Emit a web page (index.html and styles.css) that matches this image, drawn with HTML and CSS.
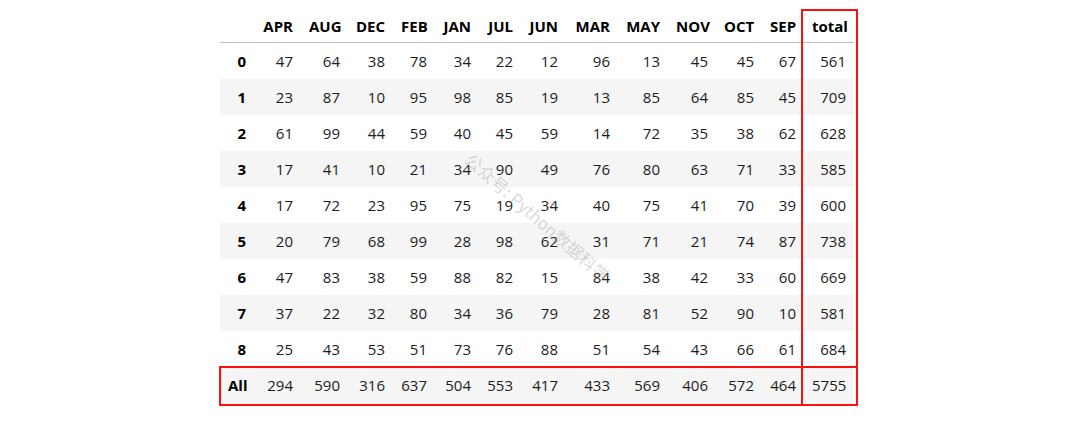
FILE: index.html
```html
<!DOCTYPE html>
<html>
<head>
<meta charset="utf-8">
<link rel="stylesheet" href="styles.css">
</head>
<body>
<div class="frame">
  <table class="df">
    <colgroup>
      <col class="w-idx"><col class="w-48"><col class="w-47"><col class="w-45"><col class="w-42"><col class="w-44"><col class="w-42"><col class="w-45"><col class="w-52"><col class="w-50"><col class="w-48b"><col class="w-46"><col class="w-42"><col class="w-50">
    </colgroup>
    <thead>
      <tr><th></th><th>APR</th><th>AUG</th><th>DEC</th><th>FEB</th><th>JAN</th><th>JUL</th><th>JUN</th><th>MAR</th><th>MAY</th><th>NOV</th><th>OCT</th><th>SEP</th><th>total</th></tr>
    </thead>
    <tbody>
      <tr><th>0</th><td>47</td><td>64</td><td>38</td><td>78</td><td>34</td><td>22</td><td>12</td><td>96</td><td>13</td><td>45</td><td>45</td><td>67</td><td>561</td></tr>
      <tr><th>1</th><td>23</td><td>87</td><td>10</td><td>95</td><td>98</td><td>85</td><td>19</td><td>13</td><td>85</td><td>64</td><td>85</td><td>45</td><td>709</td></tr>
      <tr><th>2</th><td>61</td><td>99</td><td>44</td><td>59</td><td>40</td><td>45</td><td>59</td><td>14</td><td>72</td><td>35</td><td>38</td><td>62</td><td>628</td></tr>
      <tr><th>3</th><td>17</td><td>41</td><td>10</td><td>21</td><td>34</td><td>90</td><td>49</td><td>76</td><td>80</td><td>63</td><td>71</td><td>33</td><td>585</td></tr>
      <tr><th>4</th><td>17</td><td>72</td><td>23</td><td>95</td><td>75</td><td>19</td><td>34</td><td>40</td><td>75</td><td>41</td><td>70</td><td>39</td><td>600</td></tr>
      <tr><th>5</th><td>20</td><td>79</td><td>68</td><td>99</td><td>28</td><td>98</td><td>62</td><td>31</td><td>71</td><td>21</td><td>74</td><td>87</td><td>738</td></tr>
      <tr><th>6</th><td>47</td><td>83</td><td>38</td><td>59</td><td>88</td><td>82</td><td>15</td><td>84</td><td>38</td><td>42</td><td>33</td><td>60</td><td>669</td></tr>
      <tr><th>7</th><td>37</td><td>22</td><td>32</td><td>80</td><td>34</td><td>36</td><td>79</td><td>28</td><td>81</td><td>52</td><td>90</td><td>10</td><td>581</td></tr>
      <tr><th>8</th><td>25</td><td>43</td><td>53</td><td>51</td><td>73</td><td>76</td><td>88</td><td>51</td><td>54</td><td>43</td><td>66</td><td>61</td><td>684</td></tr>
      <tr><th>All</th><td>294</td><td>590</td><td>316</td><td>637</td><td>504</td><td>553</td><td>417</td><td>433</td><td>569</td><td>406</td><td>572</td><td>464</td><td>5755</td></tr>
    </tbody>
  </table>
  <div class="mark mark-total"></div>
  <div class="mark mark-all"></div>
  <div class="watermark">公众号: Python数据科学</div>
</div>
</body>
</html>
```

FILE: styles.css
```css
html, body {
  margin: 0;
  padding: 0;
  background: #ffffff;
}

body {
  min-height: 427px;
}

.frame {
  position: relative;
  padding: 9px 0 24px 220px;
  font-family: "Open Sans", "Noto Sans", "Noto Sans CJK SC", sans-serif;
}

.df {
  border-collapse: collapse;
  table-layout: fixed;
  width: 634px;
  font-size: 15px;
  color: #1c1c1c;
}

.w-idx { width: 34px; }
.w-48 { width: 47px; }
.w-47 { width: 47px; }
.w-45 { width: 45px; }
.w-42 { width: 42px; }
.w-44 { width: 44px; }
.w-52 { width: 52px; }
.w-50 { width: 50px; }
.w-48b { width: 48px; }
.w-46 { width: 46px; }

.df th,
.df td {
  padding: 0 8px;
  text-align: right;
  vertical-align: middle;
  white-space: nowrap;
}

.df th {
  font-weight: 700;
  color: #000000;
}

.df thead th {
  height: 33px;
  border-bottom: 1px solid #bdbdbd;
}

.df tbody tr {
  height: 36px;
}

.df tbody tr:nth-child(even) {
  background: #f5f5f5;
}

.mark {
  position: absolute;
  border: 2px solid #ff1010;
  box-sizing: border-box;
}

.mark-total {
  left: 801px;
  top: 9px;
  width: 57px;
  height: 397px;
}

.mark-all {
  left: 219px;
  top: 366px;
  width: 639px;
  height: 40px;
}

.watermark {
  position: absolute;
  left: 538px;
  top: 217px;
  transform: translate(-50%, -50%) rotate(41deg);
  font-size: 17px;
  color: rgba(120, 120, 120, 0.28);
  white-space: nowrap;
  font-family: "Noto Sans CJK SC", sans-serif;
  pointer-events: none;
}
```
